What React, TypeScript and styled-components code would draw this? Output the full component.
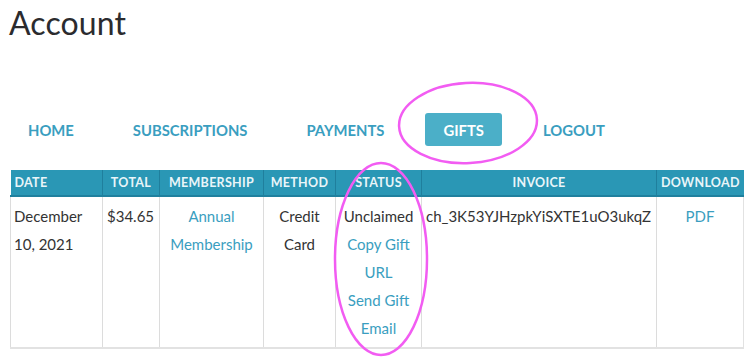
import React from 'react';
import styled, { createGlobalStyle } from 'styled-components';

const GlobalStyle = createGlobalStyle`
	html, body {
		margin: 0;
		padding: 0;
		background: #ffffff;
	}
	body {
		font-family: Lato, "Open Sans", sans-serif;
		color: #333333;
	}
`;

const Page = styled.div`
	position: relative;
	width: 750px;
	height: 357px;
	padding: 0 7px 0 10px;
	box-sizing: border-box;
	overflow: hidden;
`;

const Title = styled.h1`
	margin: 3px 0 0 -1px;
	font-size: 32px;
	line-height: 40px;
	font-weight: 400;
	color: #2b2b2e;
	letter-spacing: 0.1px;
`;

const Nav = styled.nav`
	display: flex;
	align-items: center;
	gap: 23px;
	margin-top: 70px;
	height: 33px;
`;

const NavItem = styled.a<{ $active?: boolean }>`
	display: flex;
	align-items: center;
	height: 33px;
	padding: 0 18px;
	border-radius: 3px;
	font-size: 14.8px;
	font-weight: 700;
	text-decoration: none;
	color: ${(p) => (p.$active ? '#ffffff' : '#3a9ec0')};
	background: ${(p) => (p.$active ? '#4bafc8' : 'transparent')};
`;

const Table = styled.table`
	margin-top: 24px;
	width: 733px;
	border-collapse: collapse;
	table-layout: fixed;
	font-size: 15px;
`;

const HeadCell = styled.th<{ $align?: string }>`
	height: 25px;
	padding: 0 4px;
	background: #2a97b5;
	border-left: 1px solid #1f7f9d;
	border-bottom: 2px solid #1f809e;
	color: #e9f5f9;
	font-size: 12.5px;
	font-weight: 700;
	letter-spacing: 0.3px;
	text-align: ${(p) => p.$align || 'center'};
	white-space: nowrap;

	&:first-child {
		border-left: none;
	}
`;

const Cell = styled.td<{ $align?: string }>`
	vertical-align: top;
	padding: 5px 4px 5px 4px;
	line-height: 28px;
	border-left: 1px solid #dcdcdc;
	border-bottom: 2px solid #e2e2e2;
	text-align: ${(p) => p.$align || 'center'};
	color: #333333;

	&:first-child {
		padding-left: 3px;
	}

	&:last-child {
		border-right: 1px solid #e2e2e2;
	}
`;

const Link = styled.a`
	display: block;
	color: #3a9ec0;
	text-decoration: none;
`;

const Marks = styled.svg`
	position: absolute;
	left: 0;
	top: 0;
	pointer-events: none;
`;

const columns = [
	{ label: 'Date', width: 92, align: 'left' },
	{ label: 'Total', width: 57, align: 'center' },
	{ label: 'Membership', width: 104, align: 'center' },
	{ label: 'Method', width: 72, align: 'center' },
	{ label: 'Status', width: 86, align: 'center' },
	{ label: 'Invoice', width: 235, align: 'center' },
	{ label: 'Download', width: 87, align: 'center' },
];

const navItems = ['HOME', 'SUBSCRIPTIONS', 'PAYMENTS', 'GIFTS', 'LOGOUT'];

export default function App() {
	return (
		<>
			<GlobalStyle />
			<Page>
				<Title>Account</Title>
				<Nav>
					{navItems.map((item) => (
						<NavItem key={item} href="#" $active={item === 'GIFTS'}>
							{item}
						</NavItem>
					))}
				</Nav>
				<Table>
					<colgroup>
						{columns.map((c) => (
							<col key={c.label} style={{ width: c.width }} />
						))}
					</colgroup>
					<thead>
						<tr>
							{columns.map((c) => (
								<HeadCell key={c.label} $align={c.align}>
									{c.label.toUpperCase()}
								</HeadCell>
							))}
						</tr>
					</thead>
					<tbody>
						<tr>
							<Cell $align="left">December 10, 2021</Cell>
							<Cell $align="left">$34.65</Cell>
							<Cell>
								<Link href="#">Annual Membership</Link>
							</Cell>
							<Cell>Credit Card</Cell>
							<Cell>
								Unclaimed
								<Link href="#">Copy Gift URL</Link>
								<Link href="#">Send Gift Email</Link>
							</Cell>
							<Cell $align="left">ch_3K53YJHzpkYiSXTE1uO3ukqZ</Cell>
							<Cell>
								<Link href="#">PDF</Link>
							</Cell>
						</tr>
					</tbody>
				</Table>
				<Marks width="750" height="357" viewBox="0 0 750 357">
					<ellipse cx="468" cy="123" rx="69" ry="40" fill="none" stroke="#f25cf2" strokeWidth="2.5" transform="rotate(-3 468 123)" />
					<ellipse cx="381" cy="259" rx="46" ry="96" fill="none" stroke="#f25cf2" strokeWidth="2.5" />
				</Marks>
			</Page>
		</>
	);
}
